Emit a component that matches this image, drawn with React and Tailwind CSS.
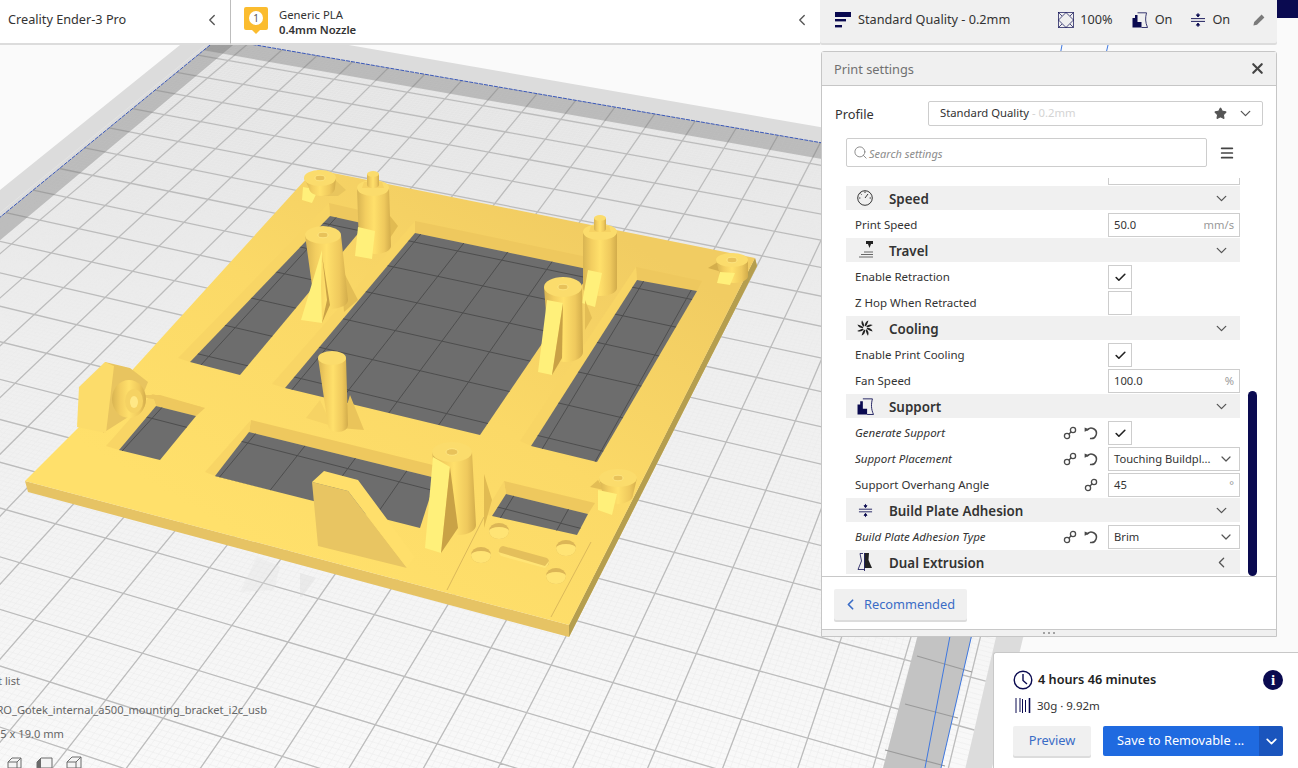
import React from 'react';
import { Check, ChevronDown, ChevronLeft, Menu, Search, Star, X } from 'lucide-react';

const NAVY = '#0a0a50';

// build plate perspective: s / t are weights towards the two vanishing points
const project = (s, t) => {
  const w = 1 - s - t;
  return [(218 + 4520 * s - 1354 * t) / w, (38.5 + 780 * s + 893 * t) / w];
};
const S = (k) => 0.0071 * k - 0.0008;
const T = (k) => 0.0175 * k;
const fmt = ([x, y]) => `${x.toFixed(1)} ${y.toFixed(1)}`;
const seg = (a, b) => `M${fmt(a)}L${fmt(b)}`;
const poly = (pts) => pts.map(fmt).join(' ');

const S_MAX = 0.157;
const T_MAX = 0.5;

let majorPath = '';
for (let k = 1; k <= 22; k++) majorPath += seg(project(S(k), 0), project(S(k), T_MAX));
for (let k = 1; k <= 28; k++) majorPath += seg(project(0, T(k)), project(S_MAX, T(k)));

let minorPath = '';
for (let k = 0; k <= 220; k++) minorPath += seg(project(S(k / 10), 0), project(S(k / 10), T_MAX));
for (let k = 0; k <= 280; k++) minorPath += seg(project(0, T(k / 10)), project(S_MAX, T(k / 10)));

const plate = poly([project(0, 0), project(S_MAX, 0), project(S_MAX, T_MAX), project(0, T_MAX)]);
const stripBack = poly([project(0, 0), project(S_MAX, 0), project(S_MAX, 0.0125), project(0, 0.0125)]);
const stripLeft = poly([project(0, 0), project(0.004, 0), project(0.004, T_MAX), project(0, T_MAX)]);
const stripRight = '917,638 883,768 941,768 971,639 1108,300 1060,300';

const windows = [
  '415,233 592,270 480,435 285,388',
  '330,216 366,224 240,375 190,362',
  '637,280 697,291 597,462 531,446',
  '156,406 196,416 160,460 119,450',
  '249,432 436,478 420,528 215,476',
  '506,494 588,514 577,535 492,516',
];

const walls = [
  ['415,221 592,258 592,270 415,233', '415,221 415,233 285,388 272,384'],
  ['329,203 368,212 366,224 330,216', '329,203 330,216 190,362 178,358'],
  ['636,267 702,281 697,291 637,280', '636,267 637,280 531,446 520,441'],
  ['152,394 205,408 196,416 156,406', '152,394 156,406 119,450 106,446'],
  ['251,420 433,465 436,478 249,432', '251,420 249,432 215,476 205,472'],
  ['504,481 595,503 588,514 506,494', '504,481 506,494 492,516 484,514'],
];

const Pillar = ({ cx, cy, rx, ry, bx, by, brx, hole, stub }) => (
  <g>
    <path d={`M${cx - rx} ${cy}L${bx - brx} ${by}A${brx} ${ry} 0 0 0 ${bx + brx} ${by}L${cx + rx} ${cy}Z`} fill="url(#cyl)" />
    <ellipse cx={cx} cy={cy} rx={rx} ry={ry} fill="#fbdc6c" />
    {hole && <ellipse cx={cx} cy={cy} rx={hole} ry={hole * 0.55} fill="#e8c25a" stroke="#ffe887" strokeWidth="0.8" />}
    {stub && (
      <g>
        <path d={`M${cx - 9} ${cy - 6}L${cx - 11} ${cy}H${cx + 11}L${cx + 9} ${cy - 6}Z`} fill="#f6d263" />
        <path d={`M${cx - 6} ${cy - 14}L${cx - 6} ${cy - 3}A6 3 0 0 0 ${cx + 6} ${cy - 3}L${cx + 6} ${cy - 14}Z`} fill="url(#cyl)" />
        <ellipse cx={cx} cy={cy - 14} rx="6" ry="3" fill="#fbdc6c" />
      </g>
    )}
  </g>
);

const Hole = ({ x, y }) => (
  <g>
    <ellipse cx={x} cy={y} rx="10" ry="8" fill="#dcb656" />
    <path d={`M${x - 10} ${y}A10 8 0 0 0 ${x + 10} ${y}A10 4 0 0 0 ${x - 10} ${y}Z`} fill="#ffe475" />
  </g>
);

const PlateScene = () => (
  <svg className="absolute inset-0" width="1298" height="768" viewBox="0 0 1298 768">
    <defs>
      <linearGradient id="cyl" x1="0" x2="1" y1="0" y2="0">
        <stop offset="0" stopColor="#d8b452" />
        <stop offset="0.25" stopColor="#f3ce60" />
        <stop offset="0.5" stopColor="#ffe06b" />
        <stop offset="0.8" stopColor="#efc95d" />
        <stop offset="1" stopColor="#d2ac4b" />
      </linearGradient>
      <linearGradient id="top" gradientUnits="userSpaceOnUse" x1="560" y1="200" x2="330" y2="590">
        <stop offset="0" stopColor="#f1cc62" />
        <stop offset="0.5" stopColor="#fbd967" />
        <stop offset="1" stopColor="#ffe06b" />
      </linearGradient>
      <linearGradient id="bed" gradientUnits="userSpaceOnUse" x1="0" y1="50" x2="0" y2="768">
        <stop offset="0" stopColor="#e2e2e2" />
        <stop offset="0.4" stopColor="#eeeeee" />
        <stop offset="1" stopColor="#f9f9f9" />
      </linearGradient>
      <clipPath id="holes">
        {windows.map((p) => <polygon key={p} points={p} />)}
      </clipPath>
    </defs>

    <rect width="1298" height="768" fill="#fafafa" />
    <polygon points="180,45 343,44 820,127 1170,190 1023,638 992,768 0,768 0,190" fill="#dcdcdc" />
    <polygon points={plate} fill="url(#bed)" />
    <path d={minorPath} stroke="#ebebeb" strokeWidth="0.5" fill="none" />
    <path d={majorPath} stroke="#bcbcbc" strokeWidth="1.3" fill="none" />
    <polygon points={stripBack} fill="#6e6e6e" fillOpacity="0.36" />
    <polygon points={stripLeft} fill="#6e6e6e" fillOpacity="0.36" />
    <polygon points={stripRight} fill="#c3c3c3" />
    <path d="M917 656L972 672M905 704L958 718M885 750L945 766" stroke="#9a9a9a" strokeWidth="1.2" />
    <path d={seg(project(0, 0), project(S_MAX + 0.004, 0))} stroke="#3a58b8" strokeWidth="1" strokeDasharray="4 1" />
    <path d={seg(project(0, 0), project(0, T_MAX))} stroke="#3a58b8" strokeWidth="1" strokeDasharray="4 1" />
    <path d="M1062 45L925 768M1108 45L941 768" stroke="#3f78e0" strokeWidth="1" />
    <polygon points="257,557 280,566 274,590 240,592" fill="#e2e2e2" fillOpacity="0.3" />
    <polygon points="300,573 316,578 302,597 300,597" fill="#dddddd" fillOpacity="0.4" />

    {/* model */}
    <polygon points="25,481 28,492 569,637 757,266 755,258 569,625" fill="#e6c364" />
    <polygon points="569,625 569,637 757,266 755,258" fill="#b59e4f" />
    <polygon points="25,481 79,427 105,400 305,180 318,170 755,258 569,625" fill="url(#top)" />

    {walls.map(([back, left]) => (
      <g key={back}>
        <polygon points={back} fill="#eec85e" />
        <polygon points={left} fill="#f8d565" />
      </g>
    ))}
    {windows.map((p) => <polygon key={p} points={p} fill="#6d6d6d" />)}
    <path d={majorPath} stroke="#4e4e4e" strokeWidth="1" fill="none" clipPath="url(#holes)" />

    {/* fine seams and holes near the front */}
    <path d="M484 517L447 590M591 542L551 617" stroke="#dcb95a" strokeWidth="1" />
    <Hole x={499} y={531} />
    <Hole x={481} y={555} />
    <Hole x={566} y={548} />
    <Hole x={556} y={576} />
    <path d="M503 546L547 558A5 5 0 0 1 545 567L501 555A5 5 0 0 1 503 546Z" fill="#e4bf5b" />
    <path d="M498 552L545 566L549 561A8 8 0 0 1 545 568L501 556Z" fill="#ffe475" />

    {/* left block with boss */}
    <polygon points="105,362 130,368 148,382 136,412 103,433" fill="#e8c45f" />
    <polygon points="79,387 105,362 114,366 106,433 77,427" fill="#fcdc6a" />
    <polygon points="140,395 147,398 205,408 160,395" fill="#eec85e" />
    <ellipse cx="129" cy="399" rx="17" ry="19" fill="url(#cyl)" />
    <ellipse cx="134" cy="401" rx="9" ry="12" fill="#f5d263" />
    <ellipse cx="134" cy="402" rx="4" ry="6" fill="#ffe886" />

    {/* gusset */}
    <polygon points="312,482 348,491 407,568 318,546" fill="#e8c562" />
    <polygon points="312,482 324,471 358,480 415,557 407,568 348,491" fill="#ffdf6b" />

    {/* centre post */}
    <polygon points="306,418 320,400 332,426" fill="#f6d364" />
    <polygon points="350,395 364,430 340,428" fill="#eac45a" />
    <Pillar cx={332} cy={358} rx={14} ry={7} bx={338} by={425} brx={10} />

    {/* posts */}
    <polygon points="303,187 318,190 312,203 302,200" fill="#fff07a" />
    <polygon points="333,178 346,190 338,196 322,196" fill="#e9c55d" />
    <Pillar cx={320} cy={178} rx={16} ry={8} bx={322} by={188} brx={13} hole={5} />
    <polygon points="390,216 398,226 390,238" fill="#e1bb52" />
    <Pillar cx={373} cy={188} rx={16} ry={8} bx={375} by={246} brx={16} stub />
    <polygon points="358,227 375,231 372,259 355,256" fill="#fff07a" />
    <polygon points="340,265 358,300 344,312" fill="#e3bd55" />
    <Pillar cx={323} cy={235} rx={18} ry={9} bx={331} by={300} brx={17} hole={5} />
    <polygon points="322,250 301,320 322,323 321,286" fill="#fff07a" />
    <polygon points="322,255 327,300 322,323 330,305" fill="#c9a246" />
    <Pillar cx={600} cy={232} rx={17} ry={8} bx={600} by={288} brx={17} stub />
    <polygon points="588,270 602,273 595,307 582,303" fill="#fff07a" />
    <polygon points="585,300 585,330 592,318" fill="#e3bd55" />
    <Pillar cx={563} cy={287} rx={19} ry={10} bx={566} by={352} brx={17} hole={5} />
    <polygon points="547,300 563,303 552,375 538,372" fill="#fff07a" />
    <polygon points="563,303 552,375 562,358" fill="#c9a246" />
    <polygon points="718,262 722,272 708,268" fill="#d4ae4c" />
    <Pillar cx={732} cy={260} rx={16} ry={7} bx={734} by={276} brx={14} hole={5} />
    <polygon points="720,272 735,273 730,285 717,283" fill="#fff07a" />
    <polygon points="598,480 604,490 590,487" fill="#e3bd55" />
    <Pillar cx={618} cy={478} rx={19} ry={9} bx={618} by={495} brx={15} hole={5} />
    <polygon points="598,490 617,494 612,515 598,510" fill="#fff07a" />
    <polygon points="484,474 492,500 484,528" fill="#e1bb52" />
    <Pillar cx={452} cy={452} rx={20} ry={10} bx={459} by={525} brx={17} hole={6} />
    <polygon points="433,457 450,467 441,553 425,548" fill="#fff07a" />
    <polygon points="450,467 441,553 458,528" fill="#c9a246" />

    {/* view cubes, bottom left */}
    <g fill="#f4f4f4" stroke="#6b6b6b" strokeWidth="1">
      <path d="M8 762L12 758H21V768H8Z" />
      <path d="M37 762L41 758H52V768H37Z" />
      <path d="M67 762L72 757H81V768H67Z" />
    </g>
    <path d="M37 762L41 758V768H37Z" fill="#6b6b6b" />
    <path d="M8 762H17V768M17 762L21 758M67 762H76V768M76 762L81 757" stroke="#6b6b6b" fill="none" />
  </svg>
);

const MaterialBadge = () => (
  <svg width="26" height="30" viewBox="0 0 26 30">
    <path d="M3 0H23A2 2 0 0 1 25 2V21A2 2 0 0 1 23 23H17L13 27L9 23H3A2 2 0 0 1 1 21V2A2 2 0 0 1 3 0Z" fill="#fbbc2f" />
    <circle cx="13" cy="11" r="7" fill="#fff" />
    <text x="13" y="15" fontSize="10" textAnchor="middle" fill="#555" fontFamily="Noto Sans">1</text>
  </svg>
);

const QualityIcon = () => (
  <svg width="16" height="16" viewBox="0 0 16 16" fill={NAVY}>
    <rect x="0" y="0" width="16" height="5" />
    <rect x="0" y="7" width="11" height="2.4" />
    <rect x="0" y="13" width="7" height="2.4" />
  </svg>
);

const InfillIcon = () => (
  <svg width="16" height="16" viewBox="0 0 16 16" fill="none" stroke={NAVY} strokeWidth="0.7">
    <rect x="0.5" y="0.5" width="15" height="15" />
    <path d="M0.5 8L8 0.5L15.5 8L8 15.5ZM0.5 0.5L4 4M15.5 0.5L12 4M0.5 15.5L4 12M15.5 15.5L12 12" />
  </svg>
);

const SupportIcon = ({ w = 16 }) => (
  <svg width={w} height={w} viewBox="0 0 16 16">
    <path d="M5.5 0.8H14.5C13.2 6 13.2 10 15.5 15.5H9.5" fill="none" stroke={NAVY} strokeWidth="0.8" />
    <path d="M0.5 15.5V6H3V3H5.5V10H9.5V15.5Z" fill={NAVY} />
  </svg>
);

const AdhesionIcon = ({ w = 16 }) => (
  <svg width={w} height={w} viewBox="0 0 16 16" fill="none" stroke={NAVY} strokeWidth="0.9">
    <path d="M1 6.6H15M1 9.4H15M8 1V4M8 12V15" />
    <path d="M6.4 2.8L8 5L9.6 2.8ZM6.4 13.2L8 11L9.6 13.2Z" fill={NAVY} />
  </svg>
);

const GaugeIcon = () => (
  <svg width="16" height="16" viewBox="0 0 16 16" fill="none" stroke="#222" strokeWidth="0.9">
    <circle cx="8" cy="8" r="7.3" />
    <path d="M8 8L11 4M8 1.5V3M2 8H3.4M14 8H12.6M3.6 3.6L4.6 4.6" />
  </svg>
);

const TravelIcon = () => (
  <svg width="17" height="18" viewBox="0 0 17 18" fill="none" stroke="#444" strokeWidth="0.8">
    <path d="M9 0H16V3H14L12.5 7L11 3H9Z" fill="#222" stroke="none" />
    <path d="M7 11H16M4 13.5H16M2 16H16" />
  </svg>
);

const FanIcon = () => (
  <svg width="16" height="16" viewBox="-8 -8 16 16" fill="#222">
    {[0, 45, 90, 135, 180, 225, 270, 315].map((a) => (
      <path key={a} transform={`rotate(${a})`} d="M-0.2 -2C-0.4 -4.5 1 -6.8 3.4 -7.6C2.8 -5.4 2.2 -3.6 0.9 -1.8Z" />
    ))}
  </svg>
);

const DualIcon = () => (
  <svg width="16" height="18" viewBox="0 0 16 18">
    <path d="M6 0.5H3L4.5 8L1 16.5H7.5" fill="none" stroke={NAVY} strokeWidth="0.8" />
    <path d="M7.5 0H12L11.5 7L15 15H7.5Z" fill="#222" />
    <path d="M7.5 0V18" stroke={NAVY} strokeWidth="0.8" />
  </svg>
);

const LinkIcon = () => (
  <svg width="14" height="14" viewBox="0 0 14 14" fill="none" stroke="#4a4a4a" strokeWidth="1.3">
    <circle cx="4" cy="10" r="2.6" />
    <circle cx="10" cy="4" r="2.6" />
    <path d="M5.8 8.2L8.2 5.8" />
  </svg>
);

const ResetIcon = () => (
  <svg width="14" height="14" viewBox="0 0 14 14" fill="none" stroke="#4a4a4a" strokeWidth="1.5">
    <path d="M3 4.2A5.2 5.2 0 1 1 6 12.4" />
    <path d="M0.6 5.8V1.4L5.6 3.4Z" fill="#4a4a4a" stroke="none" />
  </svg>
);

const Category = ({ icon, title, open = true }) => (
  <div className="flex items-start h-[26px]">
    <div className="flex items-center w-full h-6 bg-[#f0f0f0]">
      <div className="flex justify-center w-[38px]">{icon}</div>
      <span className="ml-[5px] pt-[3px] text-[13.4px] font-semibold text-[#333]">{title}</span>
      <span className="ml-auto mr-[10px] text-[#555]">
        {open ? <ChevronDown size={17} strokeWidth={1.8} /> : <ChevronLeft size={17} strokeWidth={1.8} />}
      </span>
    </div>
  </div>
);

const Row = ({ label, changed, link, reset, children }) => (
  <div className="flex items-center h-[26px] pl-[9px]">
    <span className={`text-[11.5px] text-[#333] ${changed ? 'italic' : ''}`}>{label}</span>
    <div className="flex items-center gap-[7px] ml-auto mr-[10px]">
      {link && <LinkIcon />}
      {reset && <ResetIcon />}
    </div>
    {children}
  </div>
);

const Field = ({ value, unit, dropdown }) => (
  <div className="flex items-center justify-between w-[132px] h-6 px-[5px] border border-[#cdcdcd] bg-white text-[11.2px] text-[#333]">
    <span>{value}</span>
    {unit && <span className="text-[#999]">{unit}</span>}
    {dropdown && <ChevronDown size={16} strokeWidth={1.8} className="text-[#555]" />}
  </div>
);

const CheckBox = ({ checked }) => (
  <div className="flex items-center justify-center w-6 h-6 mr-[108px] border border-[#cdcdcd] bg-white">
    {checked && <Check size={13} strokeWidth={3} className="text-[#222]" />}
  </div>
);

const SettingsList = () => (
  <div className="relative h-[398px] mt-[11px] overflow-hidden">
    <div className="-mt-[18px] w-[394px] ml-[24px]">
      <Row label=""><Field value="" /></Row>
      <Category icon={<GaugeIcon />} title="Speed" />
      <Row label="Print Speed"><Field value="50.0" unit="mm/s" /></Row>
      <Category icon={<TravelIcon />} title="Travel" />
      <Row label="Enable Retraction"><CheckBox checked /></Row>
      <Row label="Z Hop When Retracted"><CheckBox /></Row>
      <Category icon={<FanIcon />} title="Cooling" />
      <Row label="Enable Print Cooling"><CheckBox checked /></Row>
      <Row label="Fan Speed"><Field value="100.0" unit="%" /></Row>
      <Category icon={<SupportIcon w={17} />} title="Support" />
      <Row label="Generate Support" changed link reset><CheckBox checked /></Row>
      <Row label="Support Placement" changed link reset><Field value="Touching Buildpl..." dropdown /></Row>
      <Row label="Support Overhang Angle" link><Field value="45" unit="°" /></Row>
      <Category icon={<AdhesionIcon w={15} />} title="Build Plate Adhesion" />
      <Row label="Build Plate Adhesion Type" changed link reset><Field value="Brim" dropdown /></Row>
      <Category icon={<DualIcon />} title="Dual Extrusion" open={false} />
    </div>
    <div className="absolute right-[19px] bottom-0 w-[9px] h-[185px] rounded-full bg-[#0a0a50]" />
  </div>
);

const PrintSettings = () => (
  <div className="flex flex-col w-[456px] h-[586px] ml-[821px] mt-[6px] border border-[#c6c6c6] rounded-t-[3px] bg-white">
    <div className="flex items-center justify-between h-[34px] pl-3 pr-[10px] border-b border-[#c6c6c6] bg-[#f0f0f0]">
      <span className="pt-[2px] text-[12.8px] text-[#707070]">Print settings</span>
      <X size={17} strokeWidth={3} className="text-[#444]" />
    </div>
    <div className="flex items-center h-[25px] mt-[15px] pl-[13px] pr-[13px]">
      <span className="w-[93px] pt-[2px] text-[12.8px] text-[#333]">Profile</span>
      <div className="flex items-center flex-1 h-[25px] pl-[11px] pr-2 border border-[#cdcdcd] rounded-[2px] text-[11.3px] text-[#333]">
        <span>Standard Quality</span>
        <span className="ml-[3px] text-[#d4d4d4]">- 0.2mm</span>
        <Star size={13} fill="#555" className="ml-auto mr-[10px] text-[#555]" />
        <ChevronDown size={17} strokeWidth={1.8} className="text-[#555]" />
      </div>
    </div>
    <div className="flex items-center h-[29px] mt-[12px] ml-[24px]">
      <div className="flex items-center w-[361px] h-[29px] pl-[6px] border border-[#cdcdcd] rounded-[2px]">
        <Search size={15} strokeWidth={1.5} className="text-[#888]" />
        <span className="ml-[1px] pt-[3px] text-[11px] italic text-[#8c8c8c]">Search settings</span>
      </div>
      <Menu size={16} strokeWidth={2.6} className="ml-[12px] text-[#444]" />
    </div>
    <SettingsList />
    <div className="flex flex-col flex-1 border-t border-[#c8c8c8]">
      <div className="flex items-center gap-[5px] w-[133px] h-[31px] mt-[12px] ml-[12px] pl-[8px] rounded-[2px] bg-[#f0f0f0] shadow-[0_2px_0_#dcdcdc] text-[12.8px] text-[#3a6cc6]">
        <ChevronLeft size={17} strokeWidth={2.4} />
        <span>Recommended</span>
      </div>
      <div className="flex items-center justify-center h-[7px] mt-auto border-t border-[#c8c8c8] bg-[#f0f0f0] text-[#888]">
        <span className="flex gap-[3px]">
          <i className="w-[2px] h-[2px] rounded-full bg-[#888]" />
          <i className="w-[2px] h-[2px] rounded-full bg-[#888]" />
          <i className="w-[2px] h-[2px] rounded-full bg-[#888]" />
        </span>
      </div>
    </div>
  </div>
);

const TopBar = () => (
  <div className="flex h-[45px]">
    <div className="flex items-center justify-between w-[231px] h-full pb-[3px] pl-2 pr-[9px] bg-white border-r border-r-[#bdbdbd] border-b-2 border-b-[#dcdcdc]">
      <span className="text-[12.7px] text-[#333]">Creality Ender-3 Pro</span>
      <ChevronLeft size={18} strokeWidth={1.8} className="text-[#555]" />
    </div>
    <div className="flex items-center w-[589px] h-full pl-3 pr-[9px] bg-white border-b-2 border-b-[#dcdcdc]">
      <MaterialBadge />
      <div className="ml-[10px] text-[11.3px] leading-[15px] text-[#333]">
        <div>Generic PLA</div>
        <div className="font-semibold">0.4mm Nozzle</div>
      </div>
      <ChevronLeft size={18} strokeWidth={1.8} className="ml-auto mb-[3px] text-[#555]" />
    </div>
    <div className="flex items-center w-[457px] h-[43px] pb-1 pl-[15px] pr-[12px] rounded-b-[2px] bg-[#f0f0f0] shadow-[0_2px_0_#dcdcdc] text-[12.7px] text-[#333]">
      <QualityIcon />
      <span className="ml-[7px]">Standard Quality - 0.2mm</span>
      <span className="ml-[48px]"><InfillIcon /></span>
      <span className="ml-[6px]">100%</span>
      <span className="ml-[19px]"><SupportIcon /></span>
      <span className="ml-[7px]">On</span>
      <span className="ml-[18px]"><AdhesionIcon /></span>
      <span className="ml-[6px]">On</span>
      <svg className="ml-auto" width="12" height="12" viewBox="0 0 12 12" fill="#7a7a7a">
        <path d="M8.6 0.6L11.4 3.4L4 10.8L0.4 11.6L1.2 8Z" />
      </svg>
    </div>
    <div className="w-[21px] h-[18px] bg-[#0a0a50]" />
  </div>
);

const JobCard = () => (
  <div className="absolute right-0 bottom-0 w-[305px] h-[116px] pt-[17px] pl-[19px] pr-[15px] border-t border-l border-[#c8c8c8] rounded-tl-[3px] bg-white">
    <div className="flex items-center h-5">
      <svg width="20" height="20" viewBox="0 0 20 20" fill="none" stroke={NAVY} strokeWidth="1.4">
        <circle cx="10" cy="10" r="8.8" />
        <path d="M10 4V10.5L14 14" />
      </svg>
      <span className="ml-[5px] text-[12.7px] font-semibold text-[#222]">4 hours 46 minutes</span>
      <span className="flex items-center justify-center ml-auto w-5 h-5 rounded-full bg-[#0a0a50] font-['Liberation_Serif',serif] text-[15px] font-bold text-white">i</span>
    </div>
    <div className="flex items-center h-4 mt-2">
      <svg className="ml-[2px]" width="16" height="16" viewBox="0 0 16 16" stroke={NAVY}>
        <path d="M1 0V15M5 0V14M7.5 1V15M10.5 2V14" strokeWidth="1" />
        <path d="M14.5 0V15" strokeWidth="1.6" />
      </svg>
      <span className="ml-[6px] text-[11.5px] text-[#333]">30g · 9.92m</span>
    </div>
    <div className="flex mt-[12px]">
      <div className="flex items-center justify-center w-[78px] h-[30px] rounded-[2px] bg-[#f0f0f0] shadow-[0_2px_0_#dcdcdc] text-[12.8px] text-[#3a6cc6]">Preview</div>
      <div className="flex items-center w-[156px] h-[30px] ml-3 pl-[14px] rounded-l-[2px] bg-[#1f6ae0] text-[12.8px] text-white">Save to Removable ...</div>
      <div className="flex items-center justify-center w-6 h-[30px] rounded-r-[2px] bg-[#1a55bd] text-white">
        <ChevronDown size={17} strokeWidth={2.4} />
      </div>
    </div>
  </div>
);

const ObjectInfo = () => (
  <div className="absolute left-0 top-[673px] text-[11.1px] text-[#666] whitespace-nowrap">
    <div className="flex justify-end w-[20px] h-4">ct list</div>
    <div className="flex justify-end w-[267px] h-4 mt-[13px]">RO_Gotek_internal_a500_mounting_bracket_i2c_usb</div>
    <div className="flex justify-end w-[64px] h-4 mt-2">7.5 x 19.0 mm</div>
  </div>
);

export default function App() {
  return (
    <div className="relative w-[1298px] h-[768px] overflow-hidden font-['Noto_Sans',sans-serif]">
      <PlateScene />
      <ObjectInfo />
      <div className="relative flex flex-col">
        <TopBar />
        <PrintSettings />
      </div>
      <JobCard />
    </div>
  );
}
